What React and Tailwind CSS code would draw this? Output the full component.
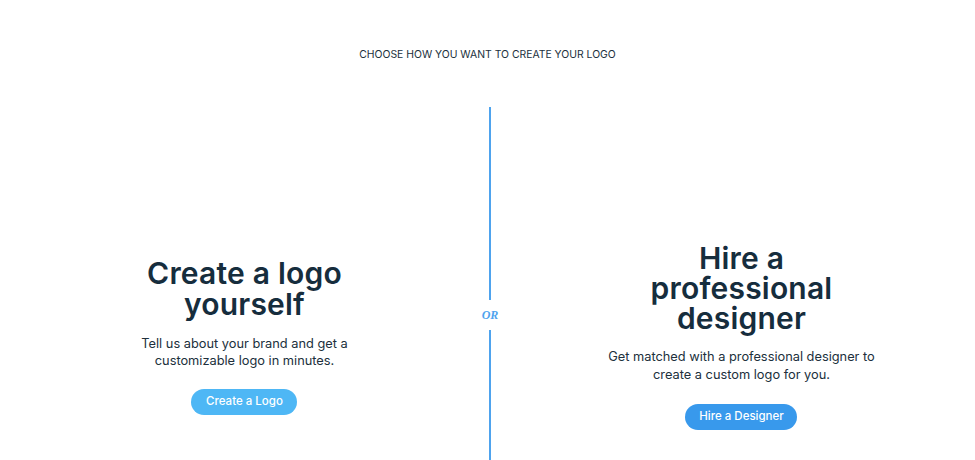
export default function App() {
  return (
    <div className="h-screen overflow-hidden bg-white text-[#162d3d]" style={{ fontFamily: 'Inter, "Noto Sans", sans-serif' }}>
      {/* Heading */}
      <div className="pt-[48px] text-center">
        <p className="text-[10.4px] leading-[14px] uppercase text-[#20303c]">
          Choose how you want to create your logo
        </p>
      </div>

      <div className="mt-[45px] flex h-[458px]">
        {/* Create yourself */}
        <div className="flex w-[489px] items-center justify-center text-center">
          <div className="flex flex-col items-center">
            <h2 className="text-[30px] font-semibold leading-[31px] tracking-[0.2px]">
              Create a logo
              <br />
              yourself
            </h2>
            <p className="mt-[15px] text-[12.8px] leading-[17.5px] text-[#20303c]">
              Tell us about your brand and get a
              <br />
              customizable logo in minutes.
            </p>
            <button className="mt-[19px] h-[26px] w-[106px] rounded-full bg-[#4eb7f5] text-[11.5px] font-medium text-white">
              Create a Logo
            </button>
          </div>
        </div>

        {/* Divider */}
        <div className="flex w-[2px] flex-col items-center">
          <div className="h-[193px] w-[2px] shrink-0 bg-[#4ea3ee]" />
          <div className="flex h-[30px] shrink-0 items-center justify-center">
            <span
              className="text-[12px] font-bold italic text-[#4ea3ee]"
              style={{ fontFamily: '"Liberation Serif", serif' }}
            >
              OR
            </span>
          </div>
          <div className="w-[2px] flex-1 bg-[#4ea3ee]" />
        </div>

        {/* Hire a designer */}
        <div className="flex flex-1 items-center justify-center pl-[17px] text-center">
          <div className="flex flex-col items-center">
            <h2 className="text-[30px] font-semibold leading-[30px] tracking-[0.2px]">
              Hire a
              <br />
              professional
              <br />
              designer
            </h2>
            <p className="mt-[15px] text-[12.8px] leading-[18px] text-[#20303c]">
              Get matched with a professional designer to
              <br />
              create a custom logo for you.
            </p>
            <button className="mt-[20px] h-[26px] w-[112px] rounded-full bg-[#3899ec] text-[11.5px] font-medium text-white">
              Hire a Designer
            </button>
          </div>
        </div>
      </div>
    </div>
  );
}
